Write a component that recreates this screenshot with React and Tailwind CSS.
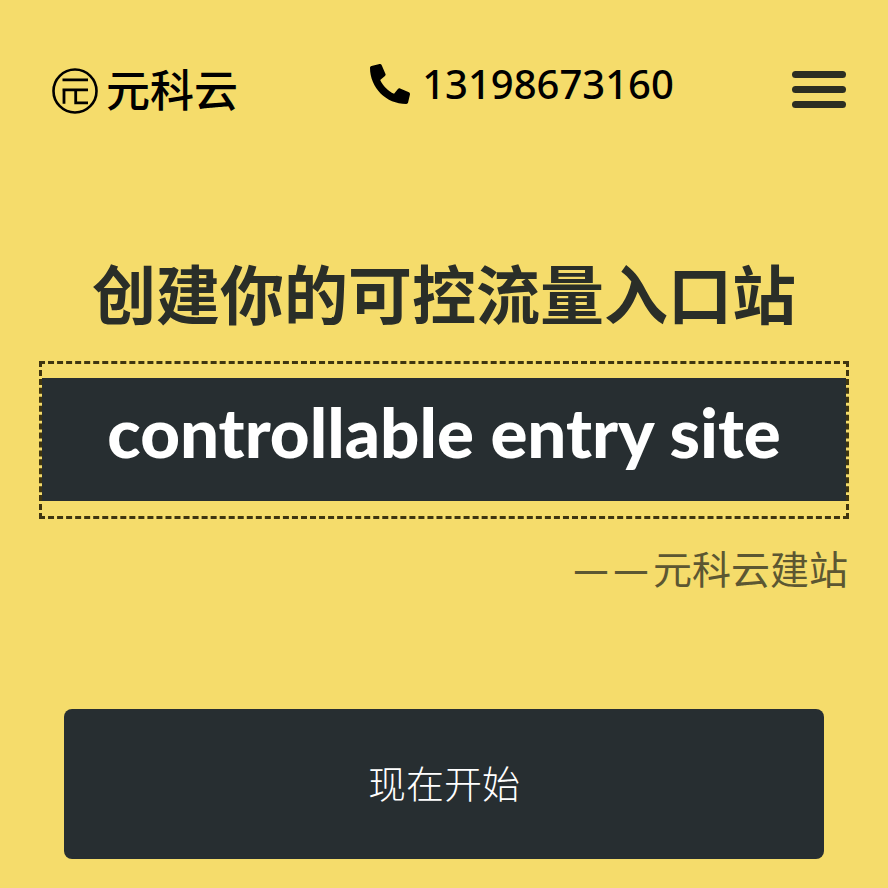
function LogoMark() {
  return (
    <svg viewBox="0 0 46 46" className="size-[46px] shrink-0" fill="none" stroke="currentColor" aria-hidden="true">
      <circle cx="23" cy="23" r="21.5" strokeWidth="2.6" />
      <path d="M10.5 11.8h25.500M10.5 21.800h25.500M12 21.800v14M23.700 21.800v13h12.300" strokeWidth="2.800" />
    </svg>
  );
}

function PhoneIcon() {
  return (
    <svg viewBox="0 0 512 512" className="size-10 shrink-0 -scale-x-100" fill="currentColor" aria-hidden="true">
      <path d="M493.4 24.6l-104-24c-11.300-2.600-22.900 3.300-27.500 13.900l-48 112c-4.200 9.800-1.400 21.300 6.900 28l60.600 49.600c-36 76.700-98.900 140.500-177.200 177.200l-49.600-60.600c-6.800-8.300-18.200-11.100-28-6.900l-112 48C3.900 366.500-2 378.100.6 389.400l24 104C27.100 504.200 36.700 512 48 512c256.100 0 464-207.500 464-464 0-11.200-7.700-20.900-18.600-23.400z" />
    </svg>
  );
}

export default function App() {
  return (
    <div className="min-h-screen bg-[#f5dc6b] px-[39px] pt-16 pb-7 font-['Noto_Sans_CJK_SC',sans-serif] text-[#272e31]">
      <header className="flex items-start justify-between pl-[13px]">
        <a href="#home" className="flex items-start gap-2 pt-1 text-black">
          <LogoMark />
          <span className="text-[44px] leading-10 font-medium">元科云</span>
        </a>
        <a href="tel:13198673160" className="flex items-center gap-3 pl-[14px] text-black">
          <PhoneIcon />
          <span className="font-['Noto_Sans',sans-serif] text-[40px] leading-10 font-medium">13198673160</span>
        </a>
        <button type="button" aria-label="菜单" className="mt-[7px] mr-[3px] flex w-[54px] flex-col gap-2">
          <span className="h-[7px] w-full rounded-full bg-[#2c2e22]" />
          <span className="h-[7px] w-full rounded-full bg-[#2c2e22]" />
          <span className="h-[7px] w-full rounded-full bg-[#2c2e22]" />
        </button>
      </header>

      <main>
        <h1 className="mt-[140px] text-center text-[64px] leading-[74px] font-bold text-[#2a2e28]">
          创建你的可控流量入口站
        </h1>
        <div className="mt-[33px] border-3 border-dashed border-[#3f3510] pt-[14px] pb-[15px]">
          <p className="bg-[#272e31] pt-[6px] pb-[22px] text-center font-['Lato',sans-serif] text-[69px] leading-[95px] font-black text-white">
            controllable entry site
          </p>
        </div>
        <p className="mt-[18px] flex items-center justify-end pr-px text-[39px] leading-[60px] text-[#5c5732]">
          <span className="mr-1 text-[40px] font-medium">—</span>
          <span className="mr-1 text-[40px] font-medium">—</span>
          <span>元科云建站</span>
        </p>
        <div className="mt-[112px] px-[25px]">
          <button type="button" className="block h-[150px] w-full rounded-lg bg-[#272e31] pb-[6px] text-[38px] font-light text-white">
            现在开始
          </button>
        </div>
      </main>
    </div>
  );
}
